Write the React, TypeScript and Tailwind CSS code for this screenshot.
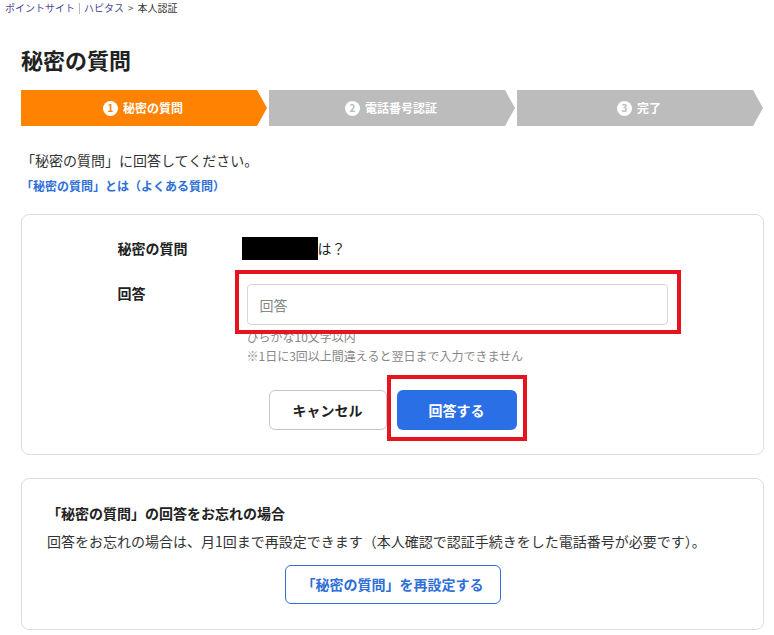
import React from "react";

function Step({ n, label, active }: { n: number; label: string; active?: boolean }) {
  return (
    <div
      className={
        "flex h-[36px] w-[246px] items-center justify-center gap-[5px] pr-[2px] [clip-path:polygon(0_0,calc(100%-10px)_0,100%_50%,calc(100%-10px)_100%,0_100%)] " +
        (active ? "bg-[#ff8200]" : "bg-[#bcbcbc]")
      }
    >
      <span
        className={
          "flex h-[15px] w-[15px] items-center justify-center rounded-full bg-white text-[10px] font-bold leading-none " +
          (active ? "text-[#ff8200]" : "text-[#bcbcbc]")
        }
      >
        {n}
      </span>
      <span className="text-[12px] font-bold text-white">{label}</span>
    </div>
  );
}

export default function App() {
  return (
    <div className="min-h-[635px] w-[774px] bg-white font-['Noto_Sans_CJK_JP','Noto_Sans',sans-serif] text-[#333]">
      {/* breadcrumb */}
      <div className="flex h-[16px] items-center pl-[5px] text-[10px] leading-none">
        <span className="text-[#4c4b8f]">ポイントサイト</span>
        <span className="mx-[4px] h-[11px] w-px bg-[#bbb]" />
        <span className="text-[#4c4b8f]">ハピタス</span>
        <span className="mx-[4px] text-[#555]">&gt;</span>
        <span className="text-[#333]">本人認証</span>
      </div>

      <div className="ml-[21px] w-[743px]">
        <h1 className="mt-[27px] text-[22px] font-bold leading-[32px] text-[#222]">秘密の質問</h1>

        <div className="mt-[15px] flex gap-[2px]">
          <Step n={1} label="秘密の質問" active />
          <Step n={2} label="電話番号認証" />
          <Step n={3} label="完了" />
        </div>

        <p className="mt-[24px] text-[14px] leading-[20px] text-[#333]">「秘密の質問」に回答してください。</p>
        <p className="mt-[8px] text-[12px] font-bold leading-[16px] text-[#2e6fd8]">「秘密の質問」とは（よくある質問）</p>

        {/* card 1 */}
        <div className="mt-[20px] rounded-[8px] border border-[#dddddd] pt-[22px] pb-[24px]">
          <div className="mx-auto w-[550px]">
            <div className="flex items-center">
              <div className="w-[129px] text-[14px] font-bold text-[#222]">秘密の質問</div>
              <div className="flex items-center text-[14px] text-[#222]">
                <span className="-ml-[5px] inline-block h-[23px] w-[76px] bg-black" />
                <span>は？</span>
              </div>
            </div>
            <div className="mt-[24px] flex">
              <div className="w-[129px] text-[14px] font-bold leading-[18px] text-[#222]">回答</div>
              <div className="flex-1">
                <div className="relative">
                  <input
                    placeholder="回答"
                    className="h-[41px] w-full rounded-[4px] border border-[#d6d6d6] bg-white px-[12px] text-[14px] text-[#333] outline-none placeholder:text-[#888]"
                  />
                  <div className="pointer-events-none absolute -top-[14px] -bottom-[9px] -left-[12px] -right-[13px] border-4 border-[#e6141e]" />
                </div>
                <p className="mt-[3px] text-[12px] leading-[17px] text-[#888]">ひらがな10文字以内</p>
                <p className="mt-[2px] text-[12px] leading-[17px] text-[#888]">※1日に3回以上間違えると翌日まで入力できません</p>
              </div>
            </div>
            <div className="mt-[26px] flex justify-center gap-[10px]">
              <button className="h-[40px] w-[118px] rounded-[6px] border border-[#c8c8c8] bg-white text-[14px] font-bold text-[#222]">
                キャンセル
              </button>
              <div className="relative">
                <button className="h-[40px] w-[120px] rounded-[6px] bg-[#2a6fe6] text-[14px] font-bold text-white">回答する</button>
                <div className="pointer-events-none absolute -top-[15px] -bottom-[11px] -left-[10px] -right-[10px] border-4 border-[#e6141e]" />
              </div>
            </div>
          </div>
        </div>

        {/* card 2 */}
        <div className="mt-[23px] rounded-[8px] border border-[#dddddd] px-[25px] pt-[24px] pb-[25px]">
          <p className="text-[14px] font-bold leading-[20px] text-[#222]">「秘密の質問」の回答をお忘れの場合</p>
          <p className="mt-[8px] text-[14px] leading-[20px] text-[#333]">
            回答をお忘れの場合は、月1回まで再設定できます（本人確認で認証手続きをした電話番号が必要です）。
          </p>
          <div className="mt-[14px] flex justify-center">
            <button className="h-[39px] w-[216px] rounded-[6px] border border-[#2e6fd8] bg-white text-[14px] font-bold text-[#2e6fd8]">
              「秘密の質問」を再設定する
            </button>
          </div>
        </div>
      </div>
    </div>
  );
}
